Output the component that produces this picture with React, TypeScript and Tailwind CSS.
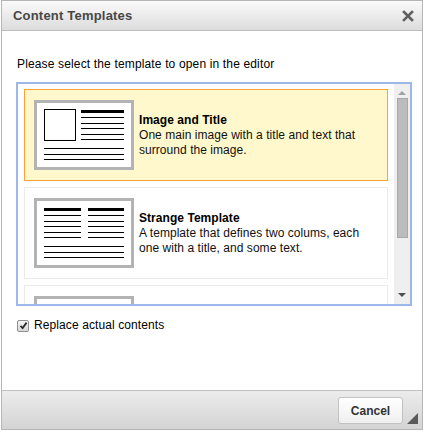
import React from "react";

// --- THUMBNAILS ---
const ImageTitleThumb = () => (
  <svg width="100" height="70" viewBox="0 0 100 70" className="shrink-0">
    <rect x="1.5" y="1.5" width="97" height="67" fill="#fff" stroke="#b3b3b3" strokeWidth="3" />
    <rect x="10.5" y="9.5" width="31" height="31" fill="none" stroke="#000" strokeWidth="1" />
    <rect x="47" y="10" width="43" height="3" fill="#000" />
    {[17.5, 23.5, 28.5, 34.5, 39.5].map((y) => (
      <line key={y} x1="47" x2="90" y1={y} y2={y} stroke="#000" strokeWidth="1" />
    ))}
    {[48.5, 54.5, 59.5].map((y) => (
      <line key={y} x1="10" x2="90" y1={y} y2={y} stroke="#000" strokeWidth="1" />
    ))}
  </svg>
);

const TwoColumnsThumb = () => (
  <svg width="100" height="70" viewBox="0 0 100 70" className="shrink-0">
    <rect x="1.5" y="1.5" width="97" height="67" fill="#fff" stroke="#b3b3b3" strokeWidth="3" />
    <rect x="10" y="10" width="37" height="3" fill="#000" />
    <rect x="54" y="10" width="36" height="3" fill="#000" />
    {[17.5, 23.5, 28.5, 34.5, 39.5].map((y) => (
      <g key={y}>
        <line x1="10" x2="47" y1={y} y2={y} stroke="#000" strokeWidth="1" />
        <line x1="54" x2="90" y1={y} y2={y} stroke="#000" strokeWidth="1" />
      </g>
    ))}
    {[48.5, 54.5, 59.5].map((y) => (
      <line key={y} x1="10" x2="90" y1={y} y2={y} stroke="#000" strokeWidth="1" />
    ))}
  </svg>
);

const BlankThumb = () => (
  <svg width="100" height="70" viewBox="0 0 100 70" className="shrink-0">
    <rect x="1.5" y="1.5" width="97" height="67" fill="#fff" stroke="#b3b3b3" strokeWidth="3" />
  </svg>
);

const templates = [
  {
    title: "Image and Title",
    desc: "One main image with a title and text that surround the image.",
    thumb: <ImageTitleThumb />,
    selected: true,
  },
  {
    title: "Strange Template",
    desc: "A template that defines two colums, each one with a title, and some text.",
    thumb: <TwoColumnsThumb />,
    selected: false,
  },
  // third one is scrolled out of view, only its frame shows
  {
    title: "",
    desc: "",
    thumb: <BlankThumb />,
    selected: false,
  },
];

export default function App() {
  return (
    <div className="w-[423px] h-[432px] bg-white font-['Liberation_Sans',Arial,sans-serif] text-[12px] text-black">
      <div className="ml-[1px] w-[422px] h-[430px] border border-[#b5b5b5] flex flex-col relative">
        {/* title bar */}
        <div className="h-[30px] shrink-0 flex items-center justify-between pl-[11px] pr-[8px] border-b border-[#bdbdbd] bg-gradient-to-b from-[#fafafa] to-[#dcdcdc]">
          <span className="text-[13px] font-bold text-[#474747] leading-none tracking-[0.2px]">Content Templates</span>
          <svg width="12" height="12" viewBox="0 0 12 12" className="mt-[1px]">
            <path d="M2 2 L10 10 M10 2 L2 10" stroke="#5e5e5e" strokeWidth="2.6" strokeLinecap="square" />
          </svg>
        </div>

        {/* body */}
        <div className="flex-1 flex flex-col pl-[14px] pt-[26px]">
          <div className="ml-[1px] leading-[15px] tracking-[0.15px]">Please select the template to open in the editor</div>

          <div className="mt-[10px] w-[396px] h-[224px] border-2 border-[#9cb8ea] flex bg-white">
            <div className="flex-1 overflow-hidden pl-[6px] pr-[6px] pt-[5px] flex flex-col gap-[6px]">
              {templates.map((t, i) => (
                <div
                  key={i}
                  className={`h-[92px] shrink-0 flex items-center pl-[9px] border ${
                    t.selected ? "border-[#f6a33c] bg-[#fff8cc]" : "border-[#ebebeb] bg-white"
                  }`}
                >
                  {t.thumb}
                  {t.title && (
                    <div className="ml-[5px] leading-[15px] pr-[20px] tracking-[0.05px]">
                      <div className="font-bold">{t.title}</div>
                      <div className="text-[#111]">{t.desc}</div>
                    </div>
                  )}
                </div>
              ))}
            </div>
            {/* scrollbar */}
            <div className="w-[16px] shrink-0 bg-[#efefef] flex flex-col items-center">
              <svg width="8" height="5" viewBox="0 0 8 5" className="mt-[6px]">
                <path d="M0 5 L4 1 L8 5 Z" fill="#a3a3a3" />
              </svg>
              <div className="mt-[3px] w-[11px] h-[140px] bg-[#bcbcbc] border border-[#a9a9a9]" />
              <div className="flex-1" />
              <svg width="8" height="5" viewBox="0 0 8 5" className="mb-[6px]">
                <path d="M0 0 L8 0 L4 4 Z" fill="#505050" />
              </svg>
            </div>
          </div>

          <label className="mt-[12px] ml-[1px] flex items-center gap-[5px] leading-[15px]">
            <span className="w-[12px] h-[12px] rounded-[2px] border border-[#8e8e8e] bg-gradient-to-b from-[#f4f4f4] to-[#d8d8d8] flex items-center justify-center">
              <svg width="9" height="9" viewBox="0 0 9 9">
                <path d="M1.5 4.8 L3.6 7 L7.6 1.6" fill="none" stroke="#2a2a2a" strokeWidth="1.8" />
              </svg>
            </span>
            <span className="tracking-[0.1px]">Replace actual contents</span>
          </label>
        </div>

        {/* footer */}
        <div className="h-[39px] shrink-0 border-t border-[#c2c2c2] bg-gradient-to-b from-[#ececec] to-[#d4d4d4] flex justify-end pt-[6px] pr-[19px]">
          <button className="w-[65px] h-[27px] rounded-[3px] border border-[#c2c2c2] bg-gradient-to-b from-[#ffffff] to-[#efefef] text-[12px] font-bold text-[#333]">
            Cancel
          </button>
        </div>
        {/* resize grip */}
        <svg width="11" height="11" viewBox="0 0 11 11" className="absolute right-[4px] bottom-[5px]">
          <path d="M11 0 L11 11 L0 11 Z" fill="#5a5a5a" />
        </svg>
      </div>
    </div>
  );
}
